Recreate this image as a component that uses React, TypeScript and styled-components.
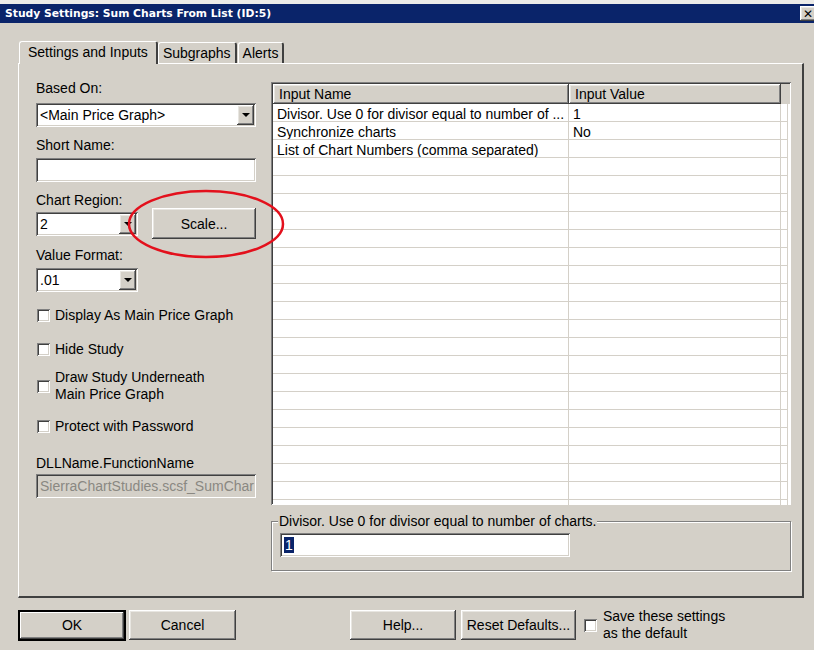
import React from 'react';
import styled, { createGlobalStyle, css } from 'styled-components';

const GlobalStyle = createGlobalStyle`
	html, body {
		margin: 0;
		padding: 0;
		background: #d4d0c8;
	}
	body {
		font-family: "Liberation Sans", Arial, sans-serif;
		font-size: 14px;
		color: #000;
	}
`;

const raised = css`
	background: #d4d0c8;
	box-shadow: inset -1px -1px #404040, inset 1px 1px #ffffff, inset -2px -2px #808080,
		inset 2px 2px #e8e6e1;
`;

const sunken = css`
	box-shadow: inset 1px 1px #808080, inset -1px -1px #ffffff, inset 2px 2px #404040,
		inset -2px -2px #d4d0c8;
`;

const Window = styled.div`
	position: relative;
	width: 814px;
	height: 650px;
	overflow: hidden;
	background: #d4d0c8;
	border-top: 4px solid #ecebe8;
	box-sizing: border-box;
`;

const TitleBar = styled.div`
	height: 19px;
	background: #0a246a;
	display: flex;
	align-items: center;
	justify-content: space-between;
	padding-left: 5px;
`;

const TitleText = styled.span`
	color: #fff;
	font-family: "DejaVu Sans", Tahoma, sans-serif;
	font-weight: bold;
	font-size: 10.75px;
`;

const CloseButton = styled.div`
	${raised};
	width: 16px;
	height: 15px;
	margin-right: -2px;
	display: flex;
	align-items: center;
	justify-content: center;
	font-family: "DejaVu Sans", sans-serif;
	font-weight: bold;
	font-size: 12px;
	line-height: 1;
`;

const TabRow = styled.div`
	display: flex;
	align-items: flex-end;
	height: 40px;
	padding-left: 19px;
`;

const Tab = styled.div<{ $active?: boolean }>`
	position: relative;
	height: ${(p) => (p.$active ? 23 : 21)}px;
	padding: 0 ${(p) => (p.$active ? 8 : 4)}px;
	margin-right: ${(p) => (p.$active ? 0 : 1)}px;
	display: flex;
	align-items: center;
	box-sizing: border-box;
	background: #d4d0c8;
	border-top: 1px solid #fff;
	border-left: 1px solid #fff;
	border-right: 2px solid #404040;
	border-radius: 3px 3px 0 0;
	z-index: ${(p) => (p.$active ? 2 : 1)};
	margin-bottom: ${(p) => (p.$active ? -1 : 0)}px;
	padding-bottom: ${(p) => (p.$active ? 2 : 0)}px;
`;

const Panel = styled.div`
	margin-left: 18px;
	width: 786px;
	height: 535px;
	box-sizing: border-box;
	border-top: 1px solid #fff;
	border-left: 1px solid #fff;
	border-right: 2px solid #404040;
	border-bottom: 2px solid #404040;
	display: flex;
	gap: 15px;
	padding: 16px 11px 0 17px;
`;

const LeftColumn = styled.div`
	width: 220px;
	display: flex;
	flex-direction: column;
`;

const Label = styled.div<{ $top?: number }>`
	line-height: 16px;
	margin-top: ${(p) => p.$top ?? 0}px;
	white-space: nowrap;
`;

const Field = styled.div<{ $top?: number; $width?: number; $disabled?: boolean }>`
	${sunken};
	box-sizing: border-box;
	width: ${(p) => p.$width ?? 220}px;
	height: 24px;
	margin-top: ${(p) => p.$top ?? 0}px;
	background: ${(p) => (p.$disabled ? '#d4d0c8' : '#fff')};
	color: ${(p) => (p.$disabled ? '#8a8882' : '#000')};
	display: flex;
	align-items: center;
	padding: 0 4px;
	white-space: nowrap;
	overflow: hidden;
`;

const Combo = styled(Field)`
	justify-content: space-between;
	padding-right: 2px;
`;

const DropButton = styled.div`
	${raised};
	width: 17px;
	height: 20px;
	display: flex;
	align-items: center;
	justify-content: center;
	flex-shrink: 0;
`;

const Triangle = styled.div`
	width: 0;
	height: 0;
	border-left: 4px solid transparent;
	border-right: 4px solid transparent;
	border-top: 4px solid #000;
`;

const Row = styled.div`
	display: flex;
	align-items: center;
	justify-content: space-between;
	height: 31px;
`;

const Button = styled.div<{ $width: number; $left?: number; $default?: boolean }>`
	${raised};
	box-sizing: border-box;
	width: ${(p) => p.$width}px;
	height: ${(p) => (p.$default ? 29 : 30)}px;
	margin-left: ${(p) => p.$left ?? 0}px;
	display: flex;
	align-items: center;
	justify-content: center;
	${(p) =>
		p.$default &&
		css`
			outline: 1px solid #000;
			outline-offset: 0;
			box-shadow: inset 1px 1px #000, inset -1px -1px #000, inset -2px -2px #404040,
				inset 2px 2px #ffffff, inset -3px -3px #808080;
		`}
`;

const ScaleButton = styled(Button)`
	height: 31px;
`;

const CheckRow = styled.div<{ $top: number }>`
	display: flex;
	align-items: center;
	margin-top: ${(p) => p.$top}px;
	line-height: 17px;
`;

const CheckBox = styled.div<{ $left?: number }>`
	${sunken};
	width: 13px;
	height: 13px;
	background: #fff;
	flex-shrink: 0;
	margin-left: ${(p) => p.$left ?? 1}px;
	margin-right: 5px;
`;

const RightColumn = styled.div`
	flex: 1;
	display: flex;
	flex-direction: column;
	padding-top: 2px;
`;

const Grid = styled.div`
	${sunken};
	height: 423px;
	box-sizing: border-box;
	padding: 2px 1px 0 2px;
	overflow: hidden;
	background: #d4d0c8;
`;

const GridRow = styled.div<{ $header?: boolean }>`
	display: grid;
	grid-template-columns: 296px 212px 7px;
	height: ${(p) => (p.$header ? 20 : 18)}px;
	background: ${(p) => (p.$header ? '#d4d0c8' : '#fff')};
	line-height: 16px;
`;

const HeadCell = styled.div<{ $pad?: number }>`
	${raised};
	padding-left: ${(p) => p.$pad ?? 6}px;
	display: flex;
	align-items: center;
	white-space: nowrap;
`;

const Cell = styled.div`
	border-right: 1px solid #d4d0c8;
	border-bottom: 1px solid #d4d0c8;
	padding: 2px 0 0 4px;
	white-space: nowrap;
	overflow: hidden;
`;

const GroupBox = styled.fieldset`
	margin: 8px 0 0 0;
	padding: 4px 8px 0 8px;
	height: 58px;
	box-sizing: border-box;
	border: 1px solid #808080;
	box-shadow: inset 1px 1px #fff, 1px 1px #fff;
	legend {
		padding: 0 1px;
		margin-left: -2px;
		line-height: 16px;
		background: #d4d0c8;
		position: relative;
	}
`;

const Selected = styled.span`
	background: #0a246a;
	color: #fff;
	padding: 0 1px;
	line-height: 16px;
`;

const Footer = styled.div`
	display: flex;
	align-items: center;
	padding: 10px 0 0 19px;
`;

const SaveText = styled.div`
	line-height: 17px;
	margin-left: 1px;
`;

const Highlight = styled.svg`
	position: absolute;
	left: 126px;
	top: 182px;
	pointer-events: none;
`;

const rows: [string, string][] = [
	['Divisor. Use 0 for divisor equal to number of ...', '1'],
	['Synchronize charts', 'No'],
	['List of Chart Numbers (comma separated)', ''],
];
while (rows.length < 23) rows.push(['', '']);

const App = (): JSX.Element => {
	return (
		<>
			<GlobalStyle />
			<Window>
				<TitleBar>
					<TitleText>Study Settings: Sum Charts From List (ID:5)</TitleText>
					<CloseButton>✕</CloseButton>
				</TitleBar>
				<TabRow>
					<Tab $active>Settings and Inputs</Tab>
					<Tab>Subgraphs</Tab>
					<Tab>Alerts</Tab>
				</TabRow>
				<Panel>
					<LeftColumn>
						<Label>Based On:</Label>
						<Combo $top={7}>
							<span>&lt;Main Price Graph&gt;</span>
							<DropButton>
								<Triangle />
							</DropButton>
						</Combo>
						<Label $top={10}>Short Name:</Label>
						<Field $top={5} />
						<Label $top={10}>Chart Region:</Label>
						<Row>
							<Combo $width={102}>
								<span>2</span>
								<DropButton>
									<Triangle />
								</DropButton>
							</Combo>
							<ScaleButton $width={104}>Scale...</ScaleButton>
						</Row>
						<Label $top={8}>Value Format:</Label>
						<Combo $top={5} $width={102}>
							<span>.01</span>
							<DropButton>
								<Triangle />
							</DropButton>
						</Combo>
						<CheckRow $top={15}>
							<CheckBox />
							Display As Main Price Graph
						</CheckRow>
						<CheckRow $top={17}>
							<CheckBox />
							Hide Study
						</CheckRow>
						<CheckRow $top={11}>
							<CheckBox />
							<div>
								Draw Study Underneath
								<br />
								Main Price Graph
							</div>
						</CheckRow>
						<CheckRow $top={15}>
							<CheckBox />
							Protect with Password
						</CheckRow>
						<Label $top={20}>DLLName.FunctionName</Label>
						<Field $top={3} $disabled>
							SierraChartStudies.scsf_SumChar
						</Field>
					</LeftColumn>
					<RightColumn>
						<Grid>
							<GridRow $header>
								<HeadCell>Input Name</HeadCell>
								<HeadCell>Input Value</HeadCell>
								<div />
							</GridRow>
							{rows.map(([name, value], i) => (
								<GridRow key={i}>
									<Cell>{name}</Cell>
									<Cell>{value}</Cell>
									<Cell />
								</GridRow>
							))}
						</Grid>
						<GroupBox>
							<legend>Divisor. Use 0 for divisor equal to number of charts.</legend>
							<Field $width={290}>
								<Selected>1</Selected>
							</Field>
						</GroupBox>
					</RightColumn>
				</Panel>
				<Footer>
					<Button $width={106} $default>
						OK
					</Button>
					<Button $width={107} $left={4}>
						Cancel
					</Button>
					<Button $width={106} $left={114}>
						Help...
					</Button>
					<Button $width={115} $left={5}>
						Reset Defaults...
					</Button>
					<CheckBox $left={8} />
					<SaveText>
						Save these settings
						<br />
						as the default
					</SaveText>
				</Footer>
				<Highlight width="164" height="80" viewBox="0 0 164 80">
					<ellipse cx="80" cy="38" rx="77" ry="33" fill="none" stroke="#e3101c" strokeWidth="2.5" />
				</Highlight>
			</Window>
		</>
	);
};

export default App;
